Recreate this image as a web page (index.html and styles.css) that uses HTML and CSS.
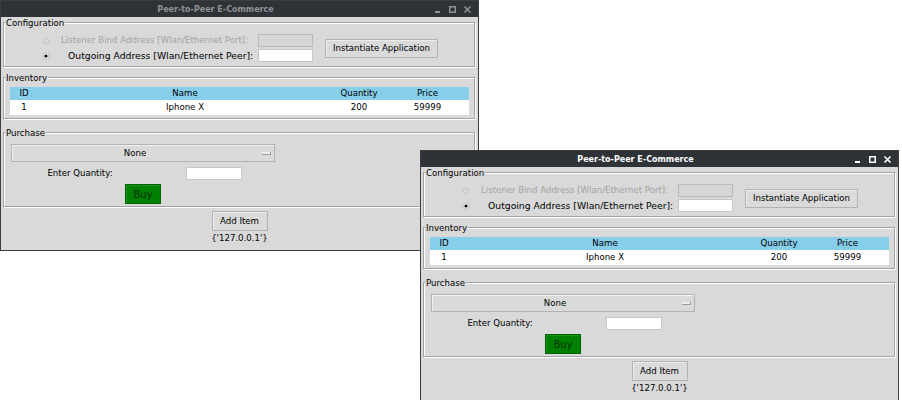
FILE: index.html
```html
<!DOCTYPE html>
<html>
<head>
<meta charset="utf-8">
<link rel="stylesheet" href="styles.css">
</head>
<body>
<div class="win win1">
  <div class="titlebar">
    <div class="title">Peer-to-Peer E-Commerce</div>
    <div class="tbtns">
      <svg class="tb" width="15" height="16" viewBox="0 0 15 16"><rect x="5" y="10" width="5" height="2" fill="currentColor"/></svg>
      <svg class="tb" width="15" height="16" viewBox="0 0 15 16"><rect x="4.75" y="5.75" width="5.5" height="5.5" fill="none" stroke="currentColor" stroke-width="1.5"/></svg>
      <svg class="tb" width="15" height="16" viewBox="0 0 15 16"><path d="M4.5 5.5 L10.5 11.5 M10.5 5.5 L4.5 11.5" stroke="currentColor" stroke-width="1.6"/></svg>
    </div>
  </div>
  <div class="content">
    <div class="frame config">
      <span class="legend">Configuration</span>
      <div class="cfg-grid">
        <div class="rb-cell">
          <svg class="rb" width="8" height="8" viewBox="0 0 8 8"><circle cx="4" cy="4" r="2.8" fill="#d9d9d9" stroke="#c2c2c2" stroke-width="0.9"/></svg>
          <span class="rb-text disabled t1">Listener Bind Address [Wlan/Ethernet Port]:</span>
        </div>
        <div class="entry entry-dis"></div>
        <div class="btn inst">Instantiate Application</div>
        <div class="rb-cell">
          <svg class="rb" width="8" height="8" viewBox="0 0 8 8"><circle cx="4" cy="4" r="3.1" fill="#f7f7f7" stroke="#b5b5b5" stroke-width="0.8"/><circle cx="4" cy="4" r="1.6" fill="#000"/></svg>
          <span class="rb-text t2">Outgoing Address [Wlan/Ethernet Peer]:</span>
        </div>
        <div class="entry"></div>
      </div>
    </div>
    <div class="frame inventory">
      <span class="legend">Inventory</span>
      <div class="table">
        <div class="tr th"><span>ID</span><span>Name</span><span>Quantity</span><span>Price</span></div>
        <div class="tr td"><span>1</span><span>Iphone X</span><span>200</span><span>59999</span></div>
      </div>
    </div>
    <div class="frame purchase">
      <span class="legend">Purchase</span>
      <div class="p-grid">
        <div class="optmenu"><span class="opt-text">None</span><span class="opt-ind"></span></div>
        <div class="q-label">Enter Quantity:</div>
        <div class="entry q-entry"></div>
        <div class="btn buy">Buy</div>
      </div>
    </div>
    <div class="bottom">
      <div class="btn add">Add Item</div>
      <div class="ip">{'127.0.0.1'}</div>
    </div>
  </div>
</div>

<div class="win win2 active">
  <div class="titlebar">
    <div class="title">Peer-to-Peer E-Commerce</div>
    <div class="tbtns">
      <svg class="tb" width="15" height="16" viewBox="0 0 15 16"><rect x="5" y="10" width="5" height="2" fill="currentColor"/></svg>
      <svg class="tb" width="15" height="16" viewBox="0 0 15 16"><rect x="4.75" y="5.75" width="5.5" height="5.5" fill="none" stroke="currentColor" stroke-width="1.5"/></svg>
      <svg class="tb" width="15" height="16" viewBox="0 0 15 16"><path d="M4.5 5.5 L10.5 11.5 M10.5 5.5 L4.5 11.5" stroke="currentColor" stroke-width="1.6"/></svg>
    </div>
  </div>
  <div class="content">
    <div class="frame config">
      <span class="legend">Configuration</span>
      <div class="cfg-grid">
        <div class="rb-cell">
          <svg class="rb" width="8" height="8" viewBox="0 0 8 8"><circle cx="4" cy="4" r="2.8" fill="#d9d9d9" stroke="#c2c2c2" stroke-width="0.9"/></svg>
          <span class="rb-text disabled t1">Listener Bind Address [Wlan/Ethernet Port]:</span>
        </div>
        <div class="entry entry-dis"></div>
        <div class="btn inst">Instantiate Application</div>
        <div class="rb-cell">
          <svg class="rb" width="8" height="8" viewBox="0 0 8 8"><circle cx="4" cy="4" r="3.1" fill="#f7f7f7" stroke="#b5b5b5" stroke-width="0.8"/><circle cx="4" cy="4" r="1.6" fill="#000"/></svg>
          <span class="rb-text t2">Outgoing Address [Wlan/Ethernet Peer]:</span>
        </div>
        <div class="entry"></div>
      </div>
    </div>
    <div class="frame inventory">
      <span class="legend">Inventory</span>
      <div class="table">
        <div class="tr th"><span>ID</span><span>Name</span><span>Quantity</span><span>Price</span></div>
        <div class="tr td"><span>1</span><span>Iphone X</span><span>200</span><span>59999</span></div>
      </div>
    </div>
    <div class="frame purchase">
      <span class="legend">Purchase</span>
      <div class="p-grid">
        <div class="optmenu"><span class="opt-text">None</span><span class="opt-ind"></span></div>
        <div class="q-label">Enter Quantity:</div>
        <div class="entry q-entry"></div>
        <div class="btn buy">Buy</div>
      </div>
    </div>
    <div class="bottom">
      <div class="btn add">Add Item</div>
      <div class="ip">{'127.0.0.1'}</div>
    </div>
  </div>
</div>
</body>
</html>
```

FILE: styles.css
```css
* { box-sizing: border-box; margin: 0; padding: 0; }
html, body { width: 902px; height: 400px; overflow: hidden; background: #ffffff; }
body {
  position: relative;
  font-family: "DejaVu Sans", sans-serif;
  font-size: 8.6px;
  line-height: 11px;
  color: #000;
}

.win {
  position: absolute;
  width: 479px;
  height: 251px;
  border: 1px solid #3a3d41;
  background: #d9d9d9;
  display: flex;
  flex-direction: column;
}
.win1 { left: 0; top: 0; }
.win2 { left: 420px; top: 150px; }

.titlebar {
  height: 16px;
  flex: none;
  background: #2f3338;
  display: flex;
  align-items: center;
  color: #8e9297;
  font-size: 8px;
  font-weight: bold;
}
.win2 .titlebar { color: #ffffff; }
.title { width: 429px; text-align: center; }
.tbtns { display: flex; }
.tb { display: block; }

.content {
  flex: 1;
  padding: 0 3px 0 2px;
  display: flex;
  flex-direction: column;
}

.frame {
  position: relative;
  border: 1px solid #a3a3a3;
  box-shadow: inset 1px 1px 0 #ffffff, 1px 1px 0 #ffffff;
}
.legend {
  position: absolute;
  left: 1px;
  top: -5px;
  padding: 0 1px;
  background: #d9d9d9;
  line-height: 11px;
}

.config { margin-top: 5px; padding: 10px 0 3px 0; }
.cfg-grid {
  display: grid;
  grid-template-columns: 254px 55px auto;
  grid-template-rows: 15px 15px;
  align-items: center;
}
.rb-cell { display: flex; align-items: center; }
.rb { display: block; margin-left: 38px; flex: none; }
.rb-text { white-space: nowrap; }
.t1 { margin-left: 11px; }
.t2 { margin-left: 18px; font-size: 9.25px; }
.disabled { color: #a3a3a3; }

.entry {
  height: 13px;
  background: #ffffff;
  border: 1px solid #c8c8c8;
}
.entry-dis { background: #d6d6d6; border-color: #b9b9b9; }

.btn {
  display: flex;
  align-items: center;
  justify-content: center;
  background: #dadada;
  border: 1px solid #b2b2b2;
  box-shadow: inset 1px 1px 0 #ececec;
  white-space: nowrap;
}
.inst {
  grid-column: 3;
  grid-row: 1 / 3;
  width: 113px;
  height: 19px;
  margin-left: 12px;
}

.inventory { margin-top: 10px; padding: 9px 0 3px 6px; }
.table { width: 459px; }
.tr {
  display: grid;
  grid-template-columns: 28px 294px 54px 83px;
  text-align: center;
}
.th { height: 13px; line-height: 13px; background: #87ceeb; }
.td { height: 15px; line-height: 14px; background: #ffffff; }

.purchase { margin-top: 13px; padding: 11px 0 2px 7px; }
.p-grid {
  display: grid;
  grid-template-columns: 137px 127px;
  grid-template-rows: 18px 22px 20px;
}
.optmenu {
  grid-column: 1 / 3;
  display: flex;
  align-items: center;
  background: #dadada;
  border: 1px solid #b2b2b2;
  box-shadow: inset 1px 1px 0 #f2f2f2;
}
.opt-text { flex: 1; text-align: center; padding-left: 2px; }
.opt-ind {
  width: 9px;
  height: 3px;
  margin: 1px 3px 0 6px;
  background: #ececec;
  border-bottom: 1px solid #9a9a9a;
  border-right: 1px solid #9a9a9a;
}
.q-label { align-self: center; text-align: center; padding-left: 1px; }
.q-entry { align-self: center; width: 56px; margin-left: 38px; margin-top: 1px; }
.buy {
  grid-column: 1 / 3;
  justify-self: center;
  width: 36px;
  height: 20px;
  background: #008000;
  border: 1px solid #006200;
  box-shadow: inset 1px 1px 0 #1a8f1a;
  color: #063006;
  font-size: 10px;
}

.bottom {
  display: flex;
  flex-direction: column;
  align-items: center;
  padding-left: 1px;
}
.add { margin-top: 4px; width: 56px; height: 20px; }
.ip { height: 15px; line-height: 15px; }
```
